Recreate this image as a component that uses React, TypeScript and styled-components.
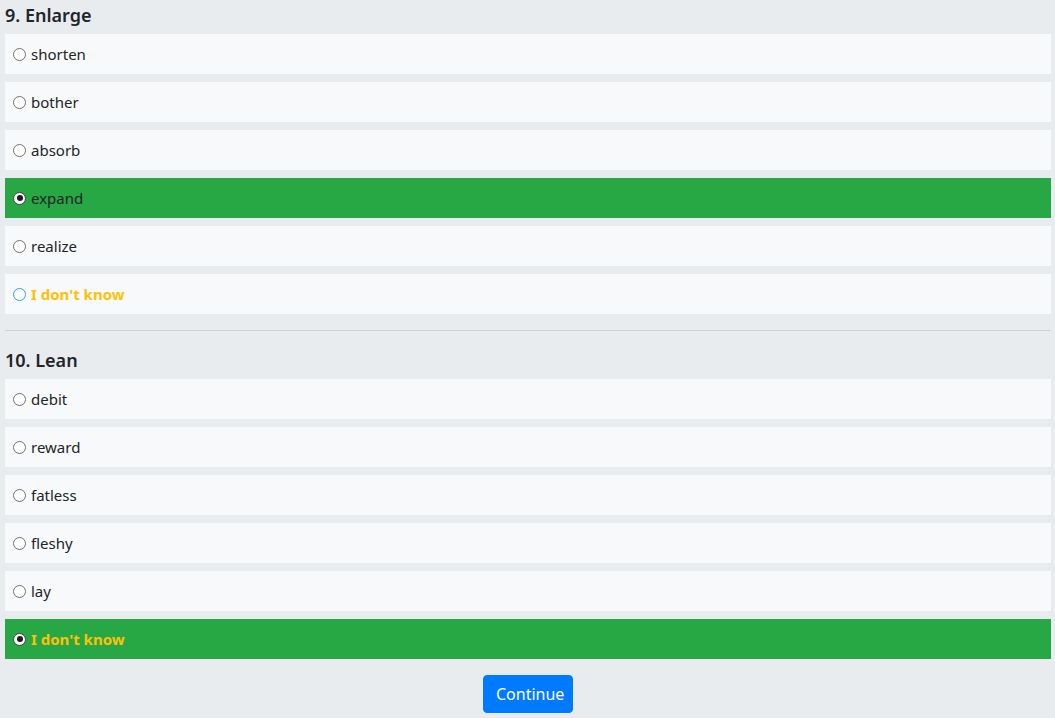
import React, { useState } from "react";
import styled, { createGlobalStyle } from "styled-components";

const GlobalStyle = createGlobalStyle`
  html, body { margin: 0; padding: 0; background: #e9ecef; }
  body { font-family: "Noto Sans", "Open Sans", Arial, sans-serif; color: #212529; }
`;

const Page = styled.div`
  padding: 0 4px 8px 5px;
`;

const Question = styled.section``;

const Title = styled.h5<{ $first?: boolean }>`
  margin: ${(p) => (p.$first ? "0" : "14px 0 0")};
  padding: 4px 0 7px;
  font-size: 18px;
  line-height: 23px;
  font-weight: 600;
  color: #212529;
`;

const Options = styled.div`
  display: flex;
  flex-direction: column;
  gap: 8px;
`;

const Option = styled.label<{ $selected?: boolean }>`
  display: flex;
  align-items: center;
  height: 40px;
  padding-left: 8px;
  background: ${(p) => (p.$selected ? "#28a745" : "#f8f9fa")};
  cursor: pointer;
  box-sizing: border-box;
`;

const Radio = styled.span<{ $checked?: boolean; $focus?: boolean }>`
  width: 13px;
  height: 13px;
  box-sizing: border-box;
  border-radius: 50%;
  border: 1.5px solid ${(p) => (p.$focus ? "#2b9fe0" : p.$checked ? "#444" : "#707070")};
  background: #fff;
  display: flex;
  align-items: center;
  justify-content: center;
  flex-shrink: 0;
  &::after {
    content: "";
    display: ${(p) => (p.$checked ? "block" : "none")};
    width: 6px;
    height: 6px;
    border-radius: 50%;
    background: #1a1a1a;
  }
`;

const OptionText = styled.span<{ $unknown?: boolean }>`
  margin-left: 5px;
  font-size: 15px;
  line-height: 20px;
  color: ${(p) => (p.$unknown ? "#ffc107" : "#212529")};
  font-weight: ${(p) => (p.$unknown ? 700 : 400)};
`;

const Divider = styled.hr`
  margin: 16px 0 0;
  border: 0;
  border-top: 1px solid #cfd3d7;
  height: 0;
`;

const Footer = styled.div`
  display: flex;
  justify-content: center;
  padding-top: 16px;
`;

const Button = styled.button`
  background: #007bff;
  color: #fff;
  border: 1px solid #007bff;
  border-radius: 4px;
  font-family: "Noto Sans", "Open Sans", Arial, sans-serif;
  font-size: 16px;
  line-height: 22px;
  padding: 7px 12px;
  width: 90px;
  height: 38px;
  box-sizing: border-box;
  cursor: pointer;
`;

type Q = { title: string; options: string[]; selected: number; focus?: number };

const questions: Q[] = [
  {
    title: "9. Enlarge",
    options: ["shorten", "bother", "absorb", "expand", "realize", "I don't know"],
    selected: 3,
    focus: 5,
  },
  {
    title: "10. Lean",
    options: ["debit", "reward", "fatless", "fleshy", "lay", "I don't know"],
    selected: 5,
  },
];

export default function App() {
  const [sel, setSel] = useState(questions.map((q) => q.selected));
  return (
    <Page>
      <GlobalStyle />
      {questions.map((q, qi) => (
        <Question key={q.title}>
          {qi > 0 && <Divider />}
          <Title $first={qi === 0}>{q.title}</Title>
          <Options>
            {q.options.map((o, oi) => {
              const checked = sel[qi] === oi;
              const unknown = o === "I don't know";
              return (
                <Option
                  key={o}
                  $selected={checked}
                  onClick={() => setSel((s) => s.map((v, i) => (i === qi ? oi : v)))}
                >
                  <Radio $checked={checked} $focus={!checked && q.focus === oi} />
                  <OptionText $unknown={unknown}>{o}</OptionText>
                </Option>
              );
            })}
          </Options>
        </Question>
      ))}
      <Footer>
        <Button>Continue</Button>
      </Footer>
    </Page>
  );
}
